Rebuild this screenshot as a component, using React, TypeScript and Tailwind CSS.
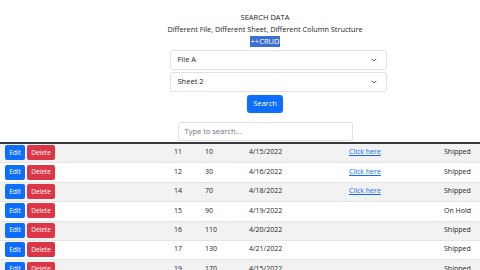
import { ChevronDown } from 'lucide-react'

interface Row {
    id: number
    qty: number
    date: string
    link: boolean
    status: string
}

const rows: Row[] = [
    { id: 11, qty: 10, date: '4/15/2022', link: true, status: 'Shipped' },
    { id: 12, qty: 30, date: '4/16/2022', link: true, status: 'Shipped' },
    { id: 14, qty: 70, date: '4/18/2022', link: true, status: 'Shipped' },
    { id: 15, qty: 90, date: '4/19/2022', link: false, status: 'On Hold' },
    { id: 16, qty: 110, date: '4/20/2022', link: false, status: 'Shipped' },
    { id: 17, qty: 130, date: '4/21/2022', link: false, status: 'Shipped' },
    { id: 19, qty: 170, date: '4/15/2022', link: false, status: 'Shipped' },
]

function SelectBox({ label }: { label: string }) {
    return (
        <div className="w-[217px] h-[20px] border border-[#dee2e6] rounded-[3px] bg-white flex items-center justify-between pl-[7px] pr-[8px] text-[7.5px] text-[#212529]">
            <span>{label}</span>
            <ChevronDown size={8} strokeWidth={2.5} className="text-[#343a40]" />
        </div>
    )
}

export default function App() {
    return (
        <div className="w-[480px] h-[270px] overflow-hidden bg-white text-[#212529] font-['Open_Sans',sans-serif]">
            <div className="flex flex-col items-center pl-[50px] pt-[12px]">
                <div className="text-[7.5px] leading-[11px]">SEARCH DATA</div>
                <div className="text-[7.3px] leading-[12px]">Different File, Different Sheet, Different Column Structure</div>
                <div className="mt-[1px] bg-[#3a6fd4] text-white text-[7.5px] leading-[11px] px-[1px]">++CRUD</div>

                <div className="mt-[3px] ml-[26px] flex flex-col gap-[2px]">
                    <SelectBox label="File A" />
                    <SelectBox label="Sheet 2" />
                </div>

                <button className="mt-[3px] w-[36px] h-[18px] rounded-[3px] bg-[#0d6efd] text-white text-[7.5px]">
                    Search
                </button>

                <div className="mt-[9px] w-[175px] h-[19px] border border-[#dee2e6] rounded-[2px] flex items-center pl-[6px] text-[7.5px] text-[#6c757d]">
                    Type to search...
                </div>
            </div>

            <div className="mt-[1px] border-t-2 border-[#343a40]">
                {rows.map((r, i) => (
                    <div
                        key={r.id}
                        className={`grid grid-cols-[170px_31px_44px_100px_95px_40px] items-center h-[19.4px] pb-[1px] border-b border-[#e5e5e5] text-[7px] ${i % 2 === 0 ? 'bg-[#f2f2f2]' : 'bg-white'}`}
                    >
                        <div className="flex gap-[2px] pl-[5px]">
                            <button className="w-[20px] h-[15px] rounded-[2px] bg-[#0d6efd] text-white text-[6.5px]">Edit</button>
                            <button className="w-[28px] h-[15px] rounded-[2px] bg-[#dc3545] text-white text-[6.5px]">Delete</button>
                        </div>
                        <div className="pl-[4px]">{r.id}</div>
                        <div className="pl-[4px]">{r.qty}</div>
                        <div className="pl-[4px]">{r.date}</div>
                        <div className="pl-[4px]">
                            {r.link && <span className="underline text-[#0d6efd]">Click here</span>}
                        </div>
                        <div className="pl-[4px]">{r.status}</div>
                    </div>
                ))}
            </div>
        </div>
    )
}
